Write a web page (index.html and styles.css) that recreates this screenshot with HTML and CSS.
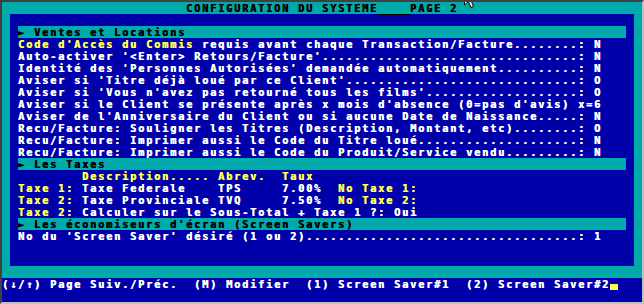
FILE: index.html
```html
<!DOCTYPE html>
<html lang="fr">
<head>
    <meta charset="UTF-8">
    <meta name="viewport" content="width=device-width, initial-scale=1.0">
    <title>Configuration du systeme - page 2</title>
    <link rel="stylesheet" href="styles.css">
</head>
<body>
    <div class="screen">
        <div class="title">CONFIGURATION DU SYSTEME<span class="under">____</span>PAGE 2</div>

        <div class="frame">
            <div class="panel">
                <div class="bar">► Ventes et Locations</div>
                <div class="line"><span class="y">Code d'Accès du Commis</span> requis avant chaque Transaction/Facture........: N</div>
                <div class="line">Auto-activer '&lt;Enter&gt; Retours/Facture'................................: N</div>
                <div class="line">Identité des 'Personnes Autorisées' demandée automatiquement..........: N</div>
                <div class="line">Aviser si 'Titre déjà loué par ce Client'.............................: O</div>
                <div class="line">Aviser si 'Vous n'avez pas retourné tous les films'...................: O</div>
                <div class="line">Aviser si le Client se présente après x mois d'absence (0=pas d'avis) x=6</div>
                <div class="line">Aviser de l'Anniversaire du Client ou si aucune Date de Naissance.....: N</div>
                <div class="line">Recu/Facture: Souligner les Titres (Description, Montant, etc)........: O</div>
                <div class="line">Recu/Facture: Imprimer aussi le Code du Titre loué....................: N</div>
                <div class="line">Recu/Facture: Imprimer aussi le Code du Produit/Service vendu.........: N</div>

                <div class="bar">► Les Taxes</div>
                <div class="line y">        Description..... Abrev.  Taux</div>
                <div class="line"><span class="y">Taxe 1: </span>Taxe Federale    TPS     7.00%  <span class="y">No Taxe 1:</span></div>
                <div class="line"><span class="y">Taxe 2: </span>Taxe Provinciale TVQ     7.50%  <span class="y">No Taxe 2:</span></div>
                <div class="line"><span class="y">Taxe 2: </span>Calculer sur le Sous-Total + Taxe 1 ?: Oui</div>

                <div class="bar">► Les économiseurs d'écran (Screen Savers)</div>
                <div class="line">No du 'Screen Saver' désiré (1 ou 2)..................................: 1</div>
            </div>
        </div>

        <div class="status">
            <div class="line">(↓/↑) Page Suiv./Préc.  (M) Modifier  (1) Screen Saver#1  (2) Screen Saver#2<span class="cursor"></span></div>
        </div>

        <svg class="pointer" width="12" height="20" viewBox="0 0 12 20">
            <path d="M0.5 0.5 L0.5 16 L4.5 12.5 L7 18.5 L9.5 17.5 L7 11.5 L11.5 11.5 Z" fill="#fff" stroke="#000" stroke-width="1"/>
        </svg>
    </div>
</body>
</html>
```

FILE: styles.css
```css
:root {
    --teal: #00AAAA;
    --blue: #0000AA;
    --yellow: #FFFF55;
    --white: #FFFFFF;
}

* {
    margin: 0;
    padding: 0;
    box-sizing: border-box;
}

body {
    background: #000;
    overflow: hidden;
}

/* 80x25 text screen, 8x12 cells */
.screen {
    position: relative;
    width: 644px;
    height: 304px;
    border: 2px solid;
    border-color: #404040 #c0c0c0 #c0c0c0 #404040;
    background: var(--blue);
    font-family: 'DejaVu Sans Mono', monospace;
    font-size: 10.3px;
    letter-spacing: 1.8px; /* 6.2 + 1.8 = 8px per cell */
    font-weight: bold;
    line-height: 12px;
    color: var(--white);
    text-shadow: 0.5px 0 0 currentColor; /* fatter, VGA-like strokes */
    overflow: hidden;
}

.title {
    height: 12px;
    background: var(--teal);
    color: #000;
    text-align: center;
    white-space: pre;
}

/* underscores run together in the DOS font */
.title .under {
    text-shadow: 0.9px 0 0 currentColor, 1.8px 0 0 currentColor;
}

.frame {
    background: var(--teal);
    padding: 0 8px 12px;
}

.panel {
    height: 252px;
    background: var(--blue);
    padding: 12px 8px 0;
}

.bar {
    height: 12px;
    background: var(--teal);
    color: #000;
    white-space: pre;
}

.line {
    height: 12px;
    white-space: pre;
}

.y {
    color: var(--yellow);
}

.status {
    height: 24px;
    background: var(--blue);
}

.cursor {
    display: inline-block;
    vertical-align: top;
    width: 8px;
    height: 12px;
    background: linear-gradient(transparent 50%, var(--yellow) 50%);
}

/* mouse pointer sitting over the title row */
.pointer {
    position: absolute;
    top: -13px;
    left: 462px;
}
```
